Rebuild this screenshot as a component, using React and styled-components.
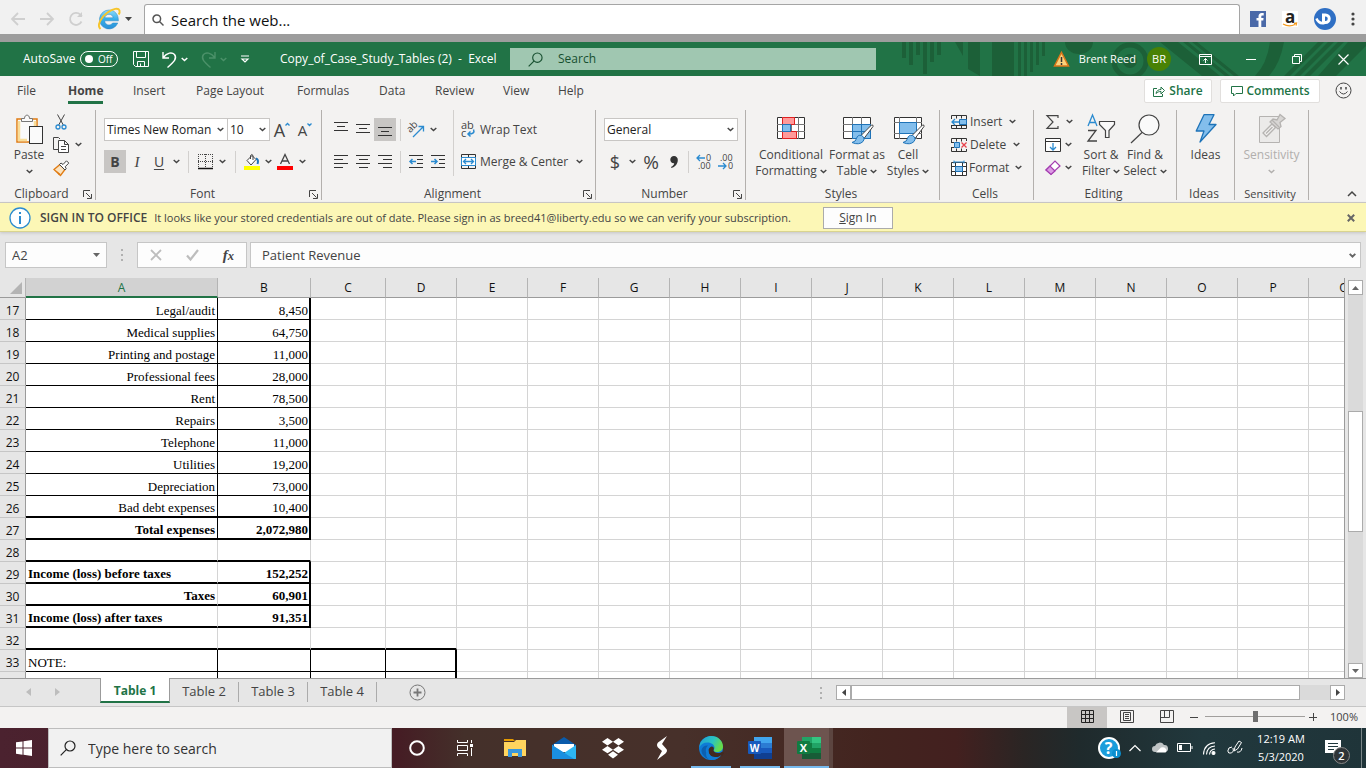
import React from 'react';
import styled, { createGlobalStyle, css } from 'styled-components';

const GlobalStyle = createGlobalStyle`
  * { box-sizing: border-box; }
  body { margin: 0; }
  button, input, select {
    font: inherit;
    color: inherit;
    margin: 0;
    padding: 0;
    border: 0;
    background: none;
    border-radius: 0;
    outline: 0;
  }
  svg { display: block; flex: none; overflow: visible; }
`;

const columns = [
  ['A', 192], ['B', 93], ['C', 75], ['D', 71], ['E', 71], ['F', 71], ['G', 71], ['H', 71],
  ['I', 71], ['J', 71], ['K', 71], ['L', 71], ['M', 71], ['N', 71], ['O', 71], ['P', 71], ['Q', 71],
];

const rows = [
  { n: 17, label: 'Legal/audit', value: '8,450', kind: 'line' },
  { n: 18, label: 'Medical supplies', value: '64,750', kind: 'line' },
  { n: 19, label: 'Printing and postage', value: '11,000', kind: 'line' },
  { n: 20, label: 'Professional fees', value: '28,000', kind: 'line' },
  { n: 21, label: 'Rent', value: '78,500', kind: 'line' },
  { n: 22, label: 'Repairs', value: '3,500', kind: 'line' },
  { n: 23, label: 'Telephone', value: '11,000', kind: 'line' },
  { n: 24, label: 'Utilities', value: '19,200', kind: 'line' },
  { n: 25, label: 'Depreciation', value: '73,000', kind: 'line' },
  { n: 26, label: 'Bad debt expenses', value: '10,400', kind: 'lineEnd' },
  { n: 27, label: 'Total expenses', value: '2,072,980', kind: 'total', bold: true },
  { n: 28, kind: 'gap' },
  { n: 29, label: 'Income (loss) before taxes', value: '152,252', kind: 'income', bold: true, left: true },
  { n: 30, label: 'Taxes', value: '60,901', kind: 'income', bold: true },
  { n: 31, label: 'Income (loss) after taxes', value: '91,351', kind: 'income', bold: true, left: true },
  { n: 32, kind: 'noteGap' },
  { n: 33, label: 'NOTE:', kind: 'note', left: true },
  { n: '', kind: 'note' },
];

const GRID = '1px solid #d4d4d4';
const THIN = '1px solid #000';
const THICK = '2px solid #000';

// right and bottom border of one cell
const cellBorders = (kind, col) => {
  let right = GRID;
  let bottom = GRID;
  if (kind === 'line' || kind === 'lineEnd' || kind === 'total') {
    if (col < 2) bottom = kind === 'line' ? THIN : THICK;
    if (col === 0) right = THIN;
    if (col === 1) right = THICK;
  }
  if (kind === 'gap' && col < 2) bottom = THICK;
  if (kind === 'income') {
    if (col < 2) bottom = THICK;
    if (col === 1) right = THICK;
  }
  if (kind === 'noteGap' && col < 4) bottom = THICK;
  if (kind === 'note' && col < 4) {
    bottom = THIN;
    right = col === 3 ? THICK : THIN;
  }
  return { right, bottom };
};

/* ---------- icons ---------- */

const Icon = ({ w = 16, h = 16, c = '#444', sw = 1, children, ...rest }) => (
  <svg width={w} height={h} viewBox={`0 0 ${w} ${h}`} fill="none" stroke={c} strokeWidth={sw} aria-hidden="true" {...rest}>
    {children}
  </svg>
);

const Chevron = ({ c = '#444', sw = 1.4 }) => (
  <Icon w={7} h={5} c={c} sw={sw}><path d="M.7 .9 3.5 3.6 6.3 .9" /></Icon>
);

const Launcher = () => (
  <Icon w={9} h={9}><path d="M.5 7V.5H7M3 3l4.500 4.500M8.500 4v4.500H4" /></Icon>
);

const IELogo = () => (
  <Icon w={24} h={24} sw={0}>
    <defs>
      <linearGradient id="ie" x1="0" y1="0" x2="0" y2="1">
        <stop offset="0" stopColor="#8fdcfb" />
        <stop offset=".5" stopColor="#35aeea" />
        <stop offset="1" stopColor="#2b8fd6" />
      </linearGradient>
    </defs>
    <path d="M12 3a9.500 9.500 0 1 0 8.800 13h-5.200c-.8 1.300-2 2-3.600 2-2.500 0-4.200-1.700-4.300-4.200h13.700C21.600 7.500 17.800 3 12 3zm-4.200 7.800C8.200 8.700 9.800 7.300 12 7.300s3.800 1.400 4.100 3.500z" fill="url(#ie)" stroke="#2a86c4" strokeWidth=".5" />
    <path d="M3.500 22C-.5 18.500 4 10 10.500 5.500 16 1.500 21.500.5 22.500 3.500c.4 1.300 0 2.700-.8 4" stroke="#f7c52b" strokeWidth="1.900" />
  </Icon>
);

const SearchGlass = ({ s = 16, c = '#444', sw = 1.2 }) => (
  <svg width={s} height={s} viewBox="0 0 16 16" fill="none" stroke={c} strokeWidth={sw} aria-hidden="true">
    <circle cx="10" cy="6" r="5" />
    <path d="M6.300 9.700.7 15.300" />
  </svg>
);

const TitleArt = () => (
  <svg width="466" height="34" viewBox="0 0 466 34" fill="#1c6038" aria-hidden="true">
    <path d="M2 0h4v16H2zM9 0h4v23H9zM16 0h4v13h-4zM23 0h4v32h-4zM30 0h4v20h-4zM37 0h4v13h-4z" />
    <path d="M55 0h8v14zM68 0h12v34L68 27zM92 0h22v34H92z" />
    <path d="M118 0h3v34h-3zM124 0h3v34h-3zM130 0h3v30h-3zM136 0h3v23h-3zM142 0h3v14h-3z" />
    <path d="M165 0h28a14 12 0 0 1-28 0z" />
    <circle cx="230" cy="19" r="16" fill="none" stroke="#1c6038" strokeWidth="5" clipPath="url(#artClip)" />
    <clipPath id="artClip"><path d="M0 0h466v34H0z" /></clipPath>
    <circle cx="230" cy="19" r="7" />
    <path d="M260 0h18l42 34h-18zM283 0h5l42 34h-5zM292 0h5l42 34h-5z" />
    <path d="M370 0h14q-4 22-15 34h-14q12-12 15-34z" />
    <path d="M418 0h6l-34 34h-6zM428 0h6l-34 34h-6zM438 0h6l-34 34h-6zM448 0h18v4l-30 30h-18z" />
  </svg>
);

const PasteIcon = () => (
  <Icon w={28} h={31}>
    <rect x="2" y="5" width="20" height="23" fill="#fafafa" stroke="#e07b12" strokeWidth="1.500" />
    <path d="M4 7v19h8" stroke="#f9dd98" strokeWidth="2.500" />
    <path d="M20 7v5" stroke="#f9dd98" strokeWidth="2.500" />
    <path d="M6.500 7.500v-3h3c0-4.500 5-4.500 5 0h3v3z" fill="#fafafa" stroke="#777" />
    <rect x="14.500" y="12.500" width="13" height="17" fill="#fafafa" stroke="#333" />
  </Icon>
);

const CutIcon = () => (
  <Icon w={16} h={16}>
    <path d="M4.500.5 10.300 11M11.500.5 5.700 11" />
    <circle cx="5" cy="13" r="2" stroke="#2b8bd0" strokeWidth="1.300" />
    <circle cx="11" cy="13" r="2" stroke="#2b8bd0" strokeWidth="1.300" />
  </Icon>
);

const CopyIcon = () => (
  <Icon w={17} h={16}>
    <path d="M5.500 12.500h-5V.5h5l1.500 1.500" />
    <path d="M5.500 3.500h6l4 4v8h-10zM11.500 3.500v4h4M8 9.500h5M8 12.500h5" fill="#fff" />
  </Icon>
);

const BrushIcon = () => (
  <Icon w={17} h={16}>
    <path d="M1 9.500 7 4.500 12 9.500 7.500 15.500z" fill="#fbe3c0" stroke="#e07b12" strokeWidth="1.300" />
    <path d="M3 10.500 7.500 14 6 15.300z" fill="#e07b12" stroke="none" />
    <path d="M6.500 4.500 8 3l2 1.500L13.500.8l2.300 2.300-3.600 3.600 1 2L12 10z" fill="#fff" stroke="#444" />
  </Icon>
);

const BordersIcon = () => (
  <Icon w={15} h={15}>
    <path d="M.5 0v14M0 .5h15M14.500 0v14M7.500 0v14M0 7.500h15" strokeDasharray="1 1" />
    <path d="M0 14.500h15" stroke="#111" strokeWidth="1.500" />
  </Icon>
);

const FillIcon = () => (
  <Icon w={17} h={16}>
    <path d="M3 6.500 8 1.500l4 4-5 5.500z" fill="#fff" />
    <path d="M6.500 5V1.500q1.500-2 2.500 0V6" />
    <path d="M12 4.500q3 1 1.500 5.500" stroke="#1e73b8" strokeWidth="2" />
    <path d="M0 14h16" stroke="#ff0" strokeWidth="4" />
  </Icon>
);

const lineSets = {
  top: [[0, 0, 14], [4, 3, 8], [8, 0, 14]],
  middle: [[2, 0, 14], [6, 3, 8], [10, 0, 14]],
  bottom: [[5, 0, 14], [9, 3, 8], [13, 0, 14]],
  left: [[1, 0, 14], [5, 0, 9], [9, 0, 14], [13, 0, 9]],
  center: [[1, 0, 14], [5, 3, 9], [9, 0, 14], [13, 3, 9]],
  right: [[1, 0, 14], [5, 5, 9], [9, 0, 14], [13, 5, 9]],
};

const LinesIcon = ({ kind }) => (
  <Icon w={14} h={16} c="#333">
    {lineSets[kind].map(([y, x, len]) => <path key={y} d={`M${x} ${y + 0.5}h${len}`} />)}
  </Icon>
);

const IndentIcon = ({ out }) => (
  <Icon w={15} h={16} c="#333">
    <path d="M0 1.500h14M8 5.500h6M8 9.500h6M0 13.500h14" />
    <path d={out ? 'M7 7.500H1M3.500 5 1 7.500 3.500 10' : 'M0 7.500h6M3.500 5 6 7.500 3.500 10'} stroke="#2b8bd0" strokeWidth="1.500" />
  </Icon>
);

const OrientationIcon = () => (
  <Icon w={17} h={16}>
    <text x="0" y="8" fontSize="10" fill="#444" stroke="none" transform="rotate(-45 5 7)">ab</text>
    <path d="M5 15 15 5M10.500 4.500H15.500V9.500" stroke="#2b8bd0" strokeWidth="1.300" />
  </Icon>
);

const WrapIcon = () => (
  <Icon w={15} h={17}>
    <text x="0" y="8" fontSize="11" fill="#444" stroke="none">ab</text>
    <text x="0" y="16" fontSize="11" fill="#444" stroke="none">c</text>
    <path d="M12.500 8.500q2 4.500-5 4.500M9.500 10.500 7 13l2.500 2.500" stroke="#2b8bd0" strokeWidth="1.500" />
  </Icon>
);

const MergeIcon = () => (
  <Icon w={15} h={15} c="#333">
    <path d="M.5.5h14v14H.5zM7.500 0v3M7.500 12v3" />
    <path d="M.5 3.500h14v8H.5z" fill="#fff" stroke="#2b8bd0" />
    <path d="M2.500 7.500h10M5 5 2.500 7.500 5 10M10 5l2.500 2.500L10 10" stroke="#2b8bd0" strokeWidth="1.300" />
  </Icon>
);

const DecimalIcon = ({ less }) => (
  <Icon w={17} h={16}>
    <text x={less ? 10 : 2} y="7" fontSize="9" fill="#444" stroke="none">{less ? '0' : '.00'}</text>
    <text x={less ? 2 : 10} y="15" fontSize="9" fill="#444" stroke="none">{less ? '.00' : '0'}</text>
    <path d={less ? 'M9 4H1M4 1 1 4l3 3' : 'M0 12h8M5 9l3 3-3 3'} stroke="#2b8bd0" strokeWidth="1.300" />
  </Icon>
);

const ConditionalIcon = () => (
  <Icon w={28} h={22} c="#333">
    <path d="M.5.5h27v21H.5z" fill="#fff" />
    <path d="M0 7.500h28M0 14.500h28M5.500 0v22M14.500 0v22M21.500 0v22" stroke="#777" />
    <path d="M5.500.5h12v7h-12zM5.500 14.500h14v7h-14z" fill="#ff9a9a" stroke="#e02020" />
    <path d="M5.500 7.500h8v7h-8z" fill="#83beec" stroke="#1e73b8" />
  </Icon>
);

const PaintBrush = () => (
  <>
    <path d="M28.500 8 18 18.500l3 3L30 9.500q.5-2-1.500-1.500z" fill="#fff" stroke="#444" />
    <path d="M18.500 18.500q-4-1-5 3-.5 3-4.500 4 7 3 11-1 2-2.500.5-4.500z" fill="#83beec" stroke="#1e73b8" />
  </>
);

const FormatTableIcon = () => (
  <Icon w={28} h={22} c="#333">
    <path d="M.5.5h27v21H.5z" fill="#fff" />
    <path d="M0 7.500h28M0 14.500h28M9.500 0v22M18.500 0v22" stroke="#777" />
    <path d="M9.500 7.500h18v14h-18z" fill="#83beec" stroke="#1e73b8" />
    <path d="M9.500 14.500h18M18.500 7.500v14" stroke="#1e73b8" />
    <PaintBrush />
  </Icon>
);

const CellStylesIcon = () => (
  <Icon w={28} h={22} c="#333">
    <path d="M.5.5h27v21H.5z" fill="#fff" />
    <path d="M0 5.500h28M0 16.500h28M5.500 0v22M22.500 0v22" stroke="#777" />
    <path d="M5.500 5.500h17v11h-17z" fill="#83beec" stroke="#1e73b8" />
    <PaintBrush />
  </Icon>
);

const InsertCellsIcon = () => (
  <Icon w={16} h={14} c="#333">
    <path d="M.5 4V.5h15v13H.5V10M5.500.5v3M10.500.5v3M5.500 10.500v3M10.500 10.500v3M0 10.500h15" fill="none" />
    <path d="M8.500 4.500h7v5h-7z" fill="#83beec" stroke="#1e73b8" />
    <path d="M8 7H1M4 4 1 7l3 3" stroke="#2b8bd0" strokeWidth="1.300" />
  </Icon>
);

const DeleteCellsIcon = () => (
  <Icon w={16} h={14} c="#333">
    <path d="M.5 4V.5h15V3M.5 10v3.500h15V11M5.500.5v3M10.500.5v3M5.500 10.500v3M10.500 10.500v3M0 4.500h3M0 9.500h3" />
    <path d="M3.500 4.500h5v5h-5z" fill="#83beec" stroke="#1e73b8" />
    <path d="m10.500 4.500 5 5M15.500 4.500l-5 5" stroke="#e8414a" strokeWidth="1.300" />
  </Icon>
);

const FormatCellsIcon = () => (
  <Icon w={16} h={16} c="#333">
    <path d="M.5 2.500h15v13H.5zM.5 6.500h15M.5 11.500h15M4.500 2.500v13M11.500 2.500v13" fill="#fff" />
    <path d="M4.500 6.500h7v5h-7z" fill="#83beec" stroke="#1e73b8" />
    <path d="M3 .5v3M13 .5v3M3 2h10" stroke="#2b8bd0" />
  </Icon>
);

const SigmaIcon = () => (
  <Icon w={14} h={14} sw={1.2}><path d="M13 3V.7H2L8 7l-6 6.300h11V11" /></Icon>
);

const FillDownIcon = () => (
  <Icon w={16} h={14} c="#333">
    <path d="M.5.5h15v13H.5zM.5 3.500h15" fill="#fff" />
    <path d="M8 5v7M5 9l3 3 3-3" stroke="#2b8bd0" strokeWidth="1.300" />
  </Icon>
);

const EraserIcon = () => (
  <Icon w={16} h={15} c="#a33db0" sw={1.200}>
    <path d="M1 10 10 1l5 5-9 8.300z" fill="#fff" />
    <path d="m1 10 4-4 5 5-4 3.500z" fill="#dc9ae4" />
  </Icon>
);

const SortIcon = () => (
  <Icon w={29} h={28}>
    <path d="M1 12 5.500 1 10 12M2.500 8.500h6" stroke="#2b8bd0" strokeWidth="1.300" />
    <path d="M1 16.500h8L1 27h9" strokeWidth="1.300" />
    <path d="M12.500 7.500h15v3l-5.500 6v7h-3.500v-7l-6-6z" fill="#fafafa" strokeWidth="1.200" />
  </Icon>
);

const FindIcon = () => (
  <Icon w={30} h={30} sw={1.200}>
    <circle cx="19" cy="11" r="10" fill="#fafafa" />
    <path d="M12 18.500 1 29" />
  </Icon>
);

const IdeasIcon = () => (
  <Icon w={22} h={29} c="#1e73b8">
    <path d="M9 .7h10L14 10.500h7L5 28l4-11H1.200z" fill="#83beec" strokeWidth="1.300" strokeLinejoin="round" />
  </Icon>
);

const SensitivityIcon = () => (
  <Icon w={28} h={30} c="#b5b3b1">
    <path d="M1.500 2.500h20v26h-20z" fill="#ebeae9" />
    <path d="m5 19 9-9 3.500 3.500-9 9zM8 19.500l6.500-6.500" fill="#f3f2f1" strokeWidth="1.300" />
    <path d="m12 8 3-3 4 1 3-5.500 5 4-5 4 1 4-3 2.500z" fill="#d8d6d4" strokeWidth="1.300" />
    <path d="m14 6 7 7" strokeWidth="1.300" />
  </Icon>
);

/* ---------- page ---------- */

const Page = styled.div`
  display: flex;
  flex-direction: column;
  height: 100vh;
  min-height: 560px;
  overflow: hidden;
  font-family: "Open Sans", "Noto Sans", sans-serif;
  font-size: 12px;
  line-height: 16px;
  color: #444;
  background: #e6e6e6;
`;

const Row = styled.div`
  display: flex;
  align-items: ${p => p.$end ? 'flex-end' : 'center'};
  gap: ${p => p.$gap || 0}px;
`;

const Spacer = styled.div`
  flex: 1;
`;

const BrowserBar = styled.div`
  display: flex;
  align-items: center;
  flex: none;
  height: 42px;
  padding: 4px 10px 0 10px;
  background: #f1f1f1;
  border-bottom: 8px solid #9d9d9d;
`;

const PlainButton = styled.button`
  display: flex;
  align-items: center;
  justify-content: center;
  flex: none;
  width: ${p => p.$w ? `${p.$w}px` : 'auto'};
  height: ${p => p.$h ? `${p.$h}px` : 'auto'};
  gap: 4px;
`;

const AddressBox = styled.label`
  display: flex;
  align-items: center;
  flex: 1;
  height: 30px;
  margin: 0 10px 0 12px;
  padding: 0 7px;
  gap: 7px;
  background: #fff;
  border: 1px solid #a5a5a5;
  border-bottom: 0;
  border-radius: 3px 3px 0 0;
  font-size: 15px;
  color: #111;
  input {
    flex: 1;
    height: 24px;
  }
  input::placeholder { color: #111; opacity: 1; }
`;

const TitleBar = styled.header`
  position: relative;
  display: flex;
  align-items: center;
  flex: none;
  height: 34px;
  color: #fff;
  background: #217346;
  > * { position: relative; }
  > svg {
    position: absolute;
    top: 0;
    right: 0;
  }
`;

const QuickAccess = styled.div`
  display: flex;
  align-items: center;
  flex: none;
  width: 280px;
  padding-left: 23px;
`;

const AutoSave = styled.label`
  display: flex;
  align-items: center;
  gap: 5px;
  width: 110px;
`;

const Toggle = styled.span`
  display: flex;
  align-items: center;
  justify-content: space-between;
  width: 38px;
  height: 16px;
  padding: 0 5px 0 4px;
  border: 1px solid #fff;
  border-radius: 8px;
  font-size: 10px;
  line-height: 14px;
  input {
    appearance: none;
    width: 8px;
    height: 8px;
    border-radius: 50%;
    background: #fff;
  }
`;

const DocTitle = styled.div`
  flex: none;
  width: 230px;
  white-space: pre;
`;

const TitleSearch = styled.label`
  display: flex;
  align-items: center;
  flex: 0 1 366px;
  height: 22px;
  padding: 0 18px;
  gap: 15px;
  color: #174f30;
  background: #a0c7b1;
  input { flex: 1; min-width: 0; }
  input::placeholder { color: #174f30; opacity: 1; }
`;

const UserName = styled.span`
  font-size: 11px;
`;

const Avatar = styled.span`
  width: 24px;
  height: 24px;
  margin: 0 11px;
  border-radius: 50%;
  background: #498205;
  font-size: 11px;
  line-height: 24px;
  text-align: center;
`;

const MenuBar = styled.nav`
  display: flex;
  flex: none;
  height: 28px;
  padding: 0 8px 0 17px;
  background: #f3f2f1;
  font-size: 12px;
`;

const MenuTabs = styled.div`
  display: grid;
  grid-template-columns: 51px 65px 63px 101px 82px 56px 68px 55px 40px;
  justify-items: start;
  flex: none;
`;

const MenuTab = styled.button`
  height: 28px;
  padding-top: 5px;
  font-weight: ${p => p.$active ? 700 : 400};
  border-bottom: 3px solid ${p => p.$active ? '#217346' : 'transparent'};
`;

const ActionButton = styled.button`
  display: flex;
  align-items: center;
  justify-content: center;
  width: ${p => p.$w}px;
  height: 24px;
  margin: 3px 8px 0 0;
  gap: 4px;
  background: #fff;
  border: 1px solid #e1dfdd;
  border-radius: 2px;
  color: #217346;
  font-weight: 600;
`;

const Ribbon = styled.div`
  display: flex;
  flex: none;
  height: 99px;
  padding-top: 6px;
  background: #f3f2f1;
  border-bottom: 1px solid #c8c6c4;
`;

const Group = styled.section`
  display: flex;
  flex-direction: column;
  flex: none;
  width: ${p => p.$w}px;
  height: 90px;
  border-right: 1px solid #b3b0ad;
`;

const GroupBody = styled.div`
  display: flex;
  height: 78px;
  padding-left: ${p => p.$pad === undefined ? 8 : p.$pad}px;
  justify-content: ${p => p.$center ? 'center' : 'flex-start'};
`;

const GroupFoot = styled.div`
  display: flex;
  align-items: center;
  height: 12px;
  padding-right: 3px;
  font-size: ${p => p.$small ? 11 : 12}px;
  line-height: 12px;
  span {
    flex: 1;
    text-align: center;
  }
`;

const BigButton = styled.button`
  display: flex;
  flex-direction: column;
  align-items: center;
  justify-content: flex-start;
  flex: none;
  align-self: flex-start;
  width: ${p => p.$w}px;
  padding-top: 4px;
  color: ${p => p.disabled ? '#b1afad' : '#444'};
  white-space: nowrap;
`;

const BigIcon = styled.span`
  display: flex;
  align-items: flex-start;
  height: 32px;
  margin-bottom: 1px;
  padding-top: ${p => p.$low ? 3 : 0}px;
`;

const BigLine = styled.span`
  display: flex;
  align-items: center;
  height: 16px;
  gap: 3px;
`;

const SmallStack = styled.div`
  display: grid;
  grid-template-rows: repeat(3, 23px);
  align-content: start;
  justify-items: start;
  width: ${p => p.$w}px;
  padding-left: ${p => p.$pad || 0}px;
`;

const SmallButton = styled.button`
  display: flex;
  align-items: center;
  gap: ${p => p.$gap || 3}px;
  white-space: nowrap;
  span + svg { margin-left: 4px; }
`;

const ToolRows = styled.div`
  display: grid;
  grid-template-rows: 23px 23px;
  row-gap: 9px;
  align-content: start;
  padding-top: 8px;
  ${p => p.$line && css`
    padding-right: 4px;
    margin-right: 7px;
    border-right: 1px solid #d2d0ce;
    height: 66px;
  `}
`;

const Tool = styled.button`
  display: flex;
  align-items: center;
  justify-content: center;
  flex: none;
  width: ${p => p.$w || 22}px;
  height: 23px;
  background: ${p => p.$on ? '#c8c6c4' : 'transparent'};
`;

const Letter = styled.span`
  font-size: ${p => p.$size || 15}px;
  line-height: 16px;
  font-weight: ${p => p.$bold ? 700 : 400};
  font-style: ${p => p.$italic ? 'italic' : 'normal'};
  font-family: ${p => p.$serif ? '"Liberation Serif", serif' : 'inherit'};
  text-decoration: ${p => p.$under ? 'underline' : 'none'};
  text-underline-offset: 2px;
`;

const Divider = styled.span`
  flex: none;
  width: 1px;
  height: 22px;
  margin: 0 ${p => p.$m || 6}px;
  background: #d2d0ce;
`;

const SelectBox = styled.label`
  display: flex;
  align-items: center;
  width: ${p => p.$w}px;
  height: 23px;
  padding: 0 3px 0 2px;
  background: #fff;
  border: 1px solid #c8c6c4;
  color: #222;
  & + & { border-left: 0; }
  select {
    flex: 1;
    min-width: 0;
    height: 21px;
    appearance: none;
  }
`;

const MessageBar = styled.div`
  display: flex;
  align-items: center;
  flex: none;
  height: 29px;
  padding: 1px 11px 0 9px;
  background: #fcf7b6;
  border-bottom: 1px solid #d9d48f;
  box-shadow: 0 1px 3px #c4c4c4;
  z-index: 1;
  white-space: nowrap;
  strong {
    font-weight: 600;
    margin: 0 7px 0 9px;
  }
`;

const MessageText = styled.span`
  font-size: 11px;
`;

const SignIn = styled.button`
  width: 70px;
  height: 22px;
  margin-left: 32px;
  background: #fdfdfd;
  border: 1px solid #ababab;
`;

const FormulaBar = styled.div`
  display: flex;
  align-items: center;
  flex: none;
  height: 46px;
  padding: 0 5px;
`;

const FormulaBox = styled.div`
  display: flex;
  align-items: center;
  justify-content: space-between;
  flex: ${p => p.$w ? 'none' : 1};
  width: ${p => p.$w ? `${p.$w}px` : 'auto'};
  height: 26px;
  padding: 0 ${p => p.$right || 6}px 0 ${p => p.$left || 6}px;
  background: #fdfdfd;
  border: 1px solid #c6c6c6;
  font-size: 13px;
  input {
    flex: 1;
    min-width: 0;
    height: 24px;
  }
`;

const Dots = styled.span`
  flex: none;
  width: 2px;
  height: 12px;
  margin: 0 14px;
  background: repeating-linear-gradient(#b0b0b0 0 2px, transparent 2px 5px);
`;

const SheetArea = styled.main`
  display: flex;
  flex: 1;
  min-height: 0;
`;

const SheetClip = styled.div`
  flex: 1;
  min-width: 0;
  overflow: hidden;
  border-right: 1px solid #9b9b9b;
`;

const Sheet = styled.table`
  table-layout: fixed;
  width: 1240px;
  border-collapse: separate;
  border-spacing: 0;
`;

const ColHead = styled.th`
  height: 20px;
  padding: 0;
  font-weight: 400;
  line-height: 17px;
  color: ${p => p.$on ? '#217346' : '#111'};
  background: ${p => p.$on ? '#d2d2d2' : '#e6e6e6'};
  border-right: 1px solid #b4b4b4;
  border-bottom: ${p => p.$on ? '2px solid #217346' : '1px solid #9b9b9b'};
`;

const Corner = styled.th`
  padding: 0;
  border-right: 1px solid #b4b4b4;
  border-bottom: 1px solid #9b9b9b;
  svg { margin-left: 10px; }
`;

const RowHead = styled.th`
  height: 22px;
  padding: 4px 0 0;
  font-weight: 400;
  line-height: 17px;
  color: #111;
  background: #e6e6e6;
  border-right: 1px solid #9b9b9b;
  border-bottom: 1px solid #c6c6c6;
`;

const Cell = styled.td`
  height: 22px;
  padding: 0 2px;
  background: #fff;
  border-right: ${p => p.$right};
  border-bottom: ${p => p.$bottom};
  font-family: "Liberation Serif", serif;
  font-size: 13px;
  font-weight: ${p => p.$bold ? 700 : 400};
  line-height: 16px;
  color: #000;
  text-align: ${p => p.$left ? 'left' : 'right'};
  vertical-align: bottom;
  white-space: nowrap;
`;

const NumberCell = styled(Cell)`
  padding-right: 1px;
  text-align: right;
`;

const VScroll = styled.div`
  display: flex;
  flex-direction: column;
  flex: none;
  width: 15px;
  margin: 2px 3px 0;
  background: #dadada;
`;

const ScrollButton = styled.button`
  display: flex;
  align-items: center;
  justify-content: center;
  flex: none;
  width: 15px;
  height: 15px;
  background: #fff;
  border: 1px solid #ababab;
`;

const VTrack = styled.div`
  flex: 1;
  display: grid;
  grid-template-rows: 116fr 122fr 131fr;
`;

const Thumb = styled.div`
  background: #fff;
  border: 1px solid #ababab;
  ${p => p.$v && 'grid-row: 2;'}
`;

const SheetTabs = styled.div`
  display: flex;
  flex: none;
  height: 29px;
  padding-right: 21px;
  border-top: 1px solid #9b9b9b;
  border-bottom: 1px solid #c6c6c6;
`;

const TabArrows = styled.div`
  display: flex;
  justify-content: space-between;
  align-items: center;
  width: 100px;
  padding: 0 40px 2px 26px;
`;

const SheetTab = styled.button`
  width: ${p => p.$active ? 70 : 69}px;
  height: ${p => p.$active ? 25 : 20}px;
  margin-top: ${p => p.$active ? -1 : 3}px;
  padding: ${p => p.$active ? '3px 0 0' : '0 0 2px'};
  font-size: ${p => p.$active ? 12 : 13}px;
  font-weight: ${p => p.$active ? 700 : 400};
  color: ${p => p.$active ? '#217346' : '#444'};
  background: ${p => p.$active ? '#fff' : 'transparent'};
  border-right: 1px solid ${p => p.$active ? '#9b9b9b' : '#ababab'};
  border-left: ${p => p.$active ? '1px solid #9b9b9b' : 0};
  border-bottom: ${p => p.$active ? '2px solid #217346' : 0};
`;

const HScroll = styled.div`
  display: flex;
  width: 509px;
  height: 15px;
  margin-top: 6px;
  background: #dadada;
`;

const HTrack = styled.div`
  flex: 1;
  display: grid;
  grid-template-columns: 449fr 30fr;
`;

const StatusBar = styled.footer`
  display: flex;
  align-items: center;
  justify-content: flex-end;
  flex: none;
  height: 21px;
  padding: 0 8px 2px 0;
  background: #f3f2f1;
  font-size: 11px;
`;

const ViewButton = styled.button`
  display: flex;
  align-items: center;
  justify-content: center;
  width: 40px;
  height: 21px;
  margin-bottom: -2px;
  padding-bottom: 2px;
  background: ${p => p.$on ? '#c8c6c4' : 'transparent'};
`;

const ZoomSlider = styled.input`
  appearance: none;
  width: 100px;
  height: 12px;
  margin: 0 4px;
  background: linear-gradient(#a19f9d, #a19f9d) center / 100% 1px no-repeat;
  &::-webkit-slider-thumb {
    appearance: none;
    width: 5px;
    height: 11px;
    background: #6e6e6e;
  }
`;

const Taskbar = styled.div`
  display: flex;
  flex: none;
  height: 40px;
  color: #fff;
  background: linear-gradient(90deg, #4b222f 0, #451c24 29%, #44302a 34%, #47302a 50%, #43241f 64%, #43201f 70%, #2a2524 75%, #1f2a2c 79%, #21383d 88%, #1f3439 100%);
`;

const TaskSearch = styled.label`
  display: flex;
  align-items: center;
  flex: 0 1 344px;
  height: 40px;
  padding: 0 11px;
  gap: 12px;
  background: #f1f1f1;
  border: 1px solid #bdbdbd;
  font-size: 14px;
  color: #333;
  input { flex: 1; min-width: 0; height: 24px; }
  input::placeholder { color: #333; opacity: 1; }
`;

const TaskButton = styled.button`
  display: flex;
  align-items: center;
  justify-content: center;
  width: 49px;
  height: 40px;
  background: ${p => p.$active ? '#6d544f' : 'transparent'};
  box-shadow: ${p => p.$active ? 'inset -4px 0 #5c4540' : 'none'};
  ${p => p.$open && css`
    background-image: linear-gradient(#76b9ed, #76b9ed);
    background-size: ${p.$active ? '100%' : '40px'} 2px;
    background-position: bottom center;
    background-repeat: no-repeat;
  `}
`;

const Tray = styled.div`
  display: flex;
  align-items: center;
`;

const TrayButton = styled.button`
  display: flex;
  align-items: center;
  justify-content: center;
  width: 25px;
  height: 40px;
`;

const Clock = styled.button`
  width: 68px;
  font-size: 11px;
  line-height: 18px;
  text-align: center;
`;

const Notifications = styled.button`
  position: relative;
  width: 26px;
  height: 40px;
  margin: 0 11px 0 9px;
  padding-left: 1px;
`;

const Badge = styled.span`
  position: absolute;
  right: 0;
  bottom: 4px;
  width: 17px;
  height: 17px;
  border-radius: 50%;
  border: 1px solid #888;
  background: #2f3437;
  font-size: 11px;
  font-weight: 600;
  line-height: 15px;
`;

const DesktopEdge = styled.span`
  width: 5px;
  height: 40px;
  border-left: 1px solid #7a8688;
`;

const RibbonGroup = ({ name, width, launcher, pad, center, small, children }) => (
  <Group $w={width}>
    <GroupBody $pad={pad} $center={center}>{children}</GroupBody>
    <GroupFoot $small={small}>
      <span>{name}</span>
      {launcher && <PlainButton aria-label={`${name} settings`}><Launcher /></PlainButton>}
    </GroupFoot>
  </Group>
);

const Big = ({ icon, lines, width, drop, disabled, low }) => (
  <BigButton $w={width} disabled={disabled}>
    <BigIcon $low={low}>{icon}</BigIcon>
    {lines.map((line, i) => (
      <BigLine key={line || 'drop'}>
        {line}
        {drop && i === lines.length - 1 && <Chevron c={disabled ? '#b1afad' : '#444'} />}
      </BigLine>
    ))}
  </BigButton>
);

const Drop = ({ label, w = 12 }) => (
  <Tool $w={w} aria-label={label}><Chevron /></Tool>
);

const BrowserStrip = () => (
  <BrowserBar>
    <Row $gap={13}>
      <PlainButton aria-label="Back">
        <Icon w={16} h={14} c="#cfcfcf" sw={1.800}><path d="M15 7H2M8 1 2 7l6 6" /></Icon>
      </PlainButton>
      <PlainButton aria-label="Forward">
        <Icon w={16} h={14} c="#cfcfcf" sw={1.800}><path d="M1 7h13M8 1l6 6-6 6" /></Icon>
      </PlainButton>
      <PlainButton aria-label="Reload">
        <Icon w={16} h={16} c="#cfcfcf" sw={1.800}>
          <path d="M13.500 10.500a6 6 0 1 1-1.200-6.800l1.700 1.600" />
          <path d="M14 1v5H9z" fill="#cfcfcf" stroke="none" />
        </Icon>
      </PlainButton>
      <PlainButton aria-label="Browser">
        <IELogo />
        <Icon w={7} h={5} sw={0}><path d="M0 0h7L3.500 4z" fill="#444" /></Icon>
      </PlainButton>
    </Row>
    <AddressBox>
      <Icon w={12} h={12} c="#555" sw={1.500}><circle cx="4.800" cy="4.800" r="3.800" /><path d="m7.500 7.500 4 4" /></Icon>
      <input placeholder="Search the web..." aria-label="Search the web" />
    </AddressBox>
    <Row $gap={16}>
      <PlainButton aria-label="Facebook">
        <Icon w={16} h={16} sw={0}>
          <path d="M0 0h16v16H0z" fill="#4a69a8" />
          <path d="M8.500 16V9.500H6.500V7h2V5.300C8.500 3.300 9.800 2 11.700 2h2v2.500h-1.300c-.8 0-1.100.4-1.100 1.100V7h2.300l-.3 2.500h-2V16z" fill="#fff" />
        </Icon>
      </PlainButton>
      <PlainButton aria-label="Amazon">
        <Icon w={16} h={16} sw={0}>
          <path d="M0 0h16v16H0z" fill="#fff" />
          <text x="3" y="12" fontSize="17" fontWeight="700" fill="#222">a</text>
          <path d="M1 13q6 3.500 12 .5M12 12.500l2.500-.5-.5 2.500" stroke="#f59a1c" strokeWidth="1.300" />
        </Icon>
      </PlainButton>
      <PlainButton aria-label="Search provider">
        <Icon w={22} h={22} sw={0}>
          <circle cx="11" cy="11" r="11" fill="#2f6fc4" />
          <path d="M9.500 7v7.500h2a3.700 3.700 0 0 0 0-7.500z" stroke="#fff" strokeWidth="3" />
          <path d="M2.500 10.500q2 5.500 8 4.500" stroke="#fff" strokeWidth="2.500" />
        </Icon>
      </PlainButton>
      <PlainButton aria-label="Menu">
        <Icon w={4} h={14} sw={0}>
          <circle cx="1" cy="2" r="1.600" fill="#444" />
          <circle cx="1" cy="7" r="1.600" fill="#444" />
          <circle cx="1" cy="12" r="1.600" fill="#444" />
        </Icon>
      </PlainButton>
    </Row>
  </BrowserBar>
);

const ExcelTitle = () => (
  <TitleBar>
    <TitleArt />
    <QuickAccess>
      <AutoSave>
        AutoSave
        <Toggle><input type="checkbox" /> Off</Toggle>
      </AutoSave>
      <PlainButton $w={16} aria-label="Save">
        <Icon w={16} h={16} c="#fff"><path d="M.5.5h15v15H2.500l-2-2zM3.500.5v6h9v-6M4.500 15.500v-5h7v5M7.500 15v-2.500" /></Icon>
      </PlainButton>
      <PlainButton $w={52} aria-label="Undo">
        <Icon w={15} h={17} c="#fff" sw={1.400}><path d="M1 1v6h6M1.300 6.500C5 1.500 10 .8 12.500 3.500 15.500 7.500 12 11 5.500 16.500" /></Icon>
        <Chevron c="#fff" />
      </PlainButton>
      <PlainButton $w={26} aria-label="Redo">
        <Icon w={15} h={17} c="#4b9169" sw={1.400}><path d="M14 1v6H8M13.700 6.500C10 1.500 5 .8 2.500 3.500-.5 7.500 3 11 9.500 16.500" /></Icon>
        <Chevron c="#4b9169" />
      </PlainButton>
      <PlainButton $w={36} aria-label="Customize Quick Access Toolbar">
        <Icon w={8} h={8} c="#fff" sw={1.200}><path d="M0 1h8M1 4l3 3 3-3z" /></Icon>
      </PlainButton>
    </QuickAccess>
    <DocTitle>Copy_of_Case_Study_Tables (2)  -  Excel</DocTitle>
    <TitleSearch>
      <SearchGlass s={15} c="#174f30" />
      <input placeholder="Search" aria-label="Search" />
    </TitleSearch>
    <Spacer />
    <Row $gap={10}>
      <Icon w={15} h={15} sw={0}>
        <path d="M7.500.5 14.500 14H.5z" fill="#fbd27c" stroke="#d9761a" strokeWidth="1.500" />
        <path d="M7.500 5v5M7.500 11v2" stroke="#333" strokeWidth="1.500" />
      </Icon>
      <UserName>Brent Reed</UserName>
    </Row>
    <Avatar>BR</Avatar>
    <PlainButton $w={46} $h={30} aria-label="Ribbon display options">
      <Icon w={13} h={11} c="#fff"><path d="M.5.5h12v10H.5zM.5 2.500h12M6.500 9V4.500M4.500 6.500l2-2 2 2" /></Icon>
    </PlainButton>
    <PlainButton $w={46} $h={30} aria-label="Minimize">
      <Icon w={10} h={10} c="#fff"><path d="M0 5.500h10" /></Icon>
    </PlainButton>
    <PlainButton $w={46} $h={30} aria-label="Restore">
      <Icon w={10} h={10} c="#fff"><path d="M.5 2.500h7v7h-7zM2.500 2V.5h7v7H8" /></Icon>
    </PlainButton>
    <PlainButton $w={46} $h={30} aria-label="Close">
      <Icon w={11} h={11} c="#fff" sw={1.200}><path d="m.5.5 10 10M10.500.5l-10 10" /></Icon>
    </PlainButton>
  </TitleBar>
);

const ExcelMenu = () => (
  <MenuBar>
    <MenuTabs>
      {['File', 'Home', 'Insert', 'Page Layout', 'Formulas', 'Data', 'Review', 'View', 'Help'].map(t => (
        <MenuTab key={t} $active={t === 'Home'}>{t}</MenuTab>
      ))}
    </MenuTabs>
    <Spacer />
    <ActionButton $w={68}>
      <Icon w={12} h={12} c="#217346"><path d="M4 3.500H.5v8h9V9M3 8.500c.5-3 2.500-4 5-4V2l3.500 3.500L8 9V6.500C6 6.500 4.500 7 3 8.500z" /></Icon>
      Share
    </ActionButton>
    <ActionButton $w={100}>
      <Icon w={12} h={11} c="#217346"><path d="M.5.5h11v7H5l-2.500 2.500V7.500h-2z" /></Icon>
      Comments
    </ActionButton>
    <PlainButton $w={30} $h={28} aria-label="Feedback">
      <Icon w={17} h={17}>
        <circle cx="8.500" cy="8.500" r="7.500" />
        <path d="M4.500 9.500q4 5 8 0" />
        <path d="M6 5v2.500M11 5v2.500" strokeWidth="1.500" />
      </Icon>
    </PlainButton>
  </MenuBar>
);

const ExcelRibbon = () => (
  <Ribbon>
    <RibbonGroup name="Clipboard" width={96} launcher>
      <Big icon={<PasteIcon />} lines={['Paste', '']} width={42} drop />
      <SmallStack $w={40} $pad={3}>
        <SmallButton aria-label="Cut"><CutIcon /></SmallButton>
        <SmallButton $gap={5} aria-label="Copy"><CopyIcon /><Chevron /></SmallButton>
        <SmallButton aria-label="Format Painter"><BrushIcon /></SmallButton>
      </SmallStack>
    </RibbonGroup>

    <RibbonGroup name="Font" width={226} launcher>
      <ToolRows>
        <Row>
          <SelectBox $w={124}>
            <select aria-label="Font"><option>Times New Roman</option></select>
            <Chevron />
          </SelectBox>
          <SelectBox $w={42}>
            <select aria-label="Font size"><option>10</option></select>
            <Chevron />
          </SelectBox>
          <Tool $w={24} aria-label="Increase font size">
            <Letter $size={18}>A</Letter>
            <Icon w={5} h={16} c="#2b8bd0" sw={1.300}><path d="M.5 3.500 2.500 1.500l2 2" /></Icon>
          </Tool>
          <Tool $w={22} aria-label="Decrease font size">
            <Letter $size={15}>A</Letter>
            <Icon w={5} h={16} c="#2b8bd0" sw={1.300}><path d="m.5 1.500 2 2 2-2" /></Icon>
          </Tool>
        </Row>
        <Row>
          <Tool $on aria-label="Bold"><Letter $bold $size={14}>B</Letter></Tool>
          <Tool aria-label="Italic"><Letter $italic $serif>I</Letter></Tool>
          <Tool aria-label="Underline"><Letter $under $size={14}>U</Letter></Tool>
          <Drop label="Underline style" />
          <Divider />
          <Tool $w={20} aria-label="Borders"><BordersIcon /></Tool>
          <Drop label="Border style" w={14} />
          <Divider />
          <Tool $w={20} aria-label="Fill color"><FillIcon /></Tool>
          <Drop label="Fill color list" />
          <Tool aria-label="Font color">
            <Icon w={16} h={16}>
              <path d="M3.500 10 8 .5l4.500 9.500M5 7h6" strokeWidth="1.300" />
              <path d="M0 14h16" stroke="#f00" strokeWidth="4" />
            </Icon>
          </Tool>
          <Drop label="Font color list" />
        </Row>
      </ToolRows>
    </RibbonGroup>

    <RibbonGroup name="Alignment" width={274} launcher>
      <ToolRows $line>
        <Row>
          <Tool aria-label="Top align"><LinesIcon kind="top" /></Tool>
          <Tool aria-label="Middle align"><LinesIcon kind="middle" /></Tool>
          <Tool $on aria-label="Bottom align"><LinesIcon kind="bottom" /></Tool>
          <Divider $m={4} />
          <Tool aria-label="Orientation"><OrientationIcon /></Tool>
          <Drop label="Orientation list" />
        </Row>
        <Row>
          <Tool aria-label="Align left"><LinesIcon kind="left" /></Tool>
          <Tool aria-label="Center"><LinesIcon kind="center" /></Tool>
          <Tool aria-label="Align right"><LinesIcon kind="right" /></Tool>
          <Divider $m={4} />
          <Tool aria-label="Decrease indent"><IndentIcon out /></Tool>
          <Tool aria-label="Increase indent"><IndentIcon /></Tool>
        </Row>
      </ToolRows>
      <ToolRows>
        <SmallButton $gap={4}><WrapIcon /><span>Wrap Text</span></SmallButton>
        <SmallButton $gap={4}><MergeIcon /><span>Merge &amp; Center</span><Chevron /></SmallButton>
      </ToolRows>
    </RibbonGroup>

    <RibbonGroup name="Number" width={150} launcher>
      <ToolRows>
        <SelectBox $w={134}>
          <select aria-label="Number format"><option>General</option></select>
          <Chevron />
        </SelectBox>
        <Row>
          <Tool aria-label="Accounting format"><Letter $size={18}>$</Letter></Tool>
          <Drop label="Accounting list" />
          <Tool $w={26} aria-label="Percent"><Letter $size={19}>%</Letter></Tool>
          <Tool $w={20} aria-label="Comma style">
            <Icon w={8} h={12} sw={0}><path d="M4 0a3.700 3.700 0 0 1 3.800 4C7.800 8 5 11 1.500 12L1 11c2-1 3-2.200 3.200-3.800C1.800 7.400.3 5.600.3 3.700A3.600 3.600 0 0 1 4 0z" fill="#333" /></Icon>
          </Tool>
          <Divider $m={4} />
          <Tool aria-label="Increase decimal"><DecimalIcon less /></Tool>
          <Tool aria-label="Decrease decimal"><DecimalIcon /></Tool>
        </Row>
      </ToolRows>
    </RibbonGroup>

    <RibbonGroup name="Styles" width={194}>
      <Big icon={<ConditionalIcon />} lines={['Conditional', 'Formatting']} width={74} drop low />
      <Big icon={<FormatTableIcon />} lines={['Format as', 'Table']} width={58} drop low />
      <Big icon={<CellStylesIcon />} lines={['Cell', 'Styles']} width={44} drop low />
    </RibbonGroup>

    <RibbonGroup name="Cells" width={94} pad={11}>
      <SmallStack $w={80}>
        <SmallButton><InsertCellsIcon /><span>Insert</span><Chevron /></SmallButton>
        <SmallButton><DeleteCellsIcon /><span>Delete</span><Chevron /></SmallButton>
        <SmallButton $gap={2}><FormatCellsIcon /><span>Format</span><Chevron /></SmallButton>
      </SmallStack>
    </RibbonGroup>

    <RibbonGroup name="Editing" width={143} pad={11}>
      <SmallStack $w={34}>
        <SmallButton $gap={7} aria-label="AutoSum"><SigmaIcon /><Chevron /></SmallButton>
        <SmallButton $gap={4} aria-label="Fill"><FillDownIcon /><Chevron /></SmallButton>
        <SmallButton $gap={4} aria-label="Clear"><EraserIcon /><Chevron /></SmallButton>
      </SmallStack>
      <Big icon={<SortIcon />} lines={['Sort &', 'Filter']} width={44} drop />
      <Big icon={<FindIcon />} lines={['Find &', 'Select']} width={44} drop />
    </RibbonGroup>

    <RibbonGroup name="Ideas" width={58} pad={0} center>
      <Big icon={<IdeasIcon />} lines={['Ideas']} width={50} />
    </RibbonGroup>

    <RibbonGroup name="Sensitivity" width={74} pad={0} center small>
      <Big icon={<SensitivityIcon />} lines={['Sensitivity', '']} width={70} drop disabled />
    </RibbonGroup>

    <Spacer />
    <Row $end>
      <PlainButton $w={28} $h={16} aria-label="Collapse ribbon">
        <Icon w={10} h={6} sw={1.500}><path d="m1 5 4-4 4 4" /></Icon>
      </PlainButton>
    </Row>
  </Ribbon>
);

const SignInMessage = () => (
  <MessageBar>
    <Icon w={22} h={22} c="#2b8bd0" sw={1.300}>
      <circle cx="11" cy="11" r="10" fill="#fff" />
      <path d="M11 9v8M11 5v2" strokeWidth="2" />
    </Icon>
    <strong>SIGN IN TO OFFICE</strong>
    <MessageText>It looks like your stored credentials are out of date. Please sign in as breed41@liberty.edu so we can verify your subscription.</MessageText>
    <SignIn><u>S</u>ign In</SignIn>
    <Spacer />
    <PlainButton aria-label="Dismiss">
      <Icon w={8} h={8} c="#666" sw={2}><path d="m.8.8 6.400 6.400M7.200.8.8 7.200" /></Icon>
    </PlainButton>
  </MessageBar>
);

const Formula = () => (
  <FormulaBar>
    <FormulaBox $w={102}>
      <input defaultValue="A2" aria-label="Name box" />
      <Icon w={7} h={4} sw={0}><path d="M0 0h7L3.500 4z" fill="#666" /></Icon>
    </FormulaBox>
    <Dots />
    <FormulaBox $w={110} $left={12} $right={12}>
      <PlainButton aria-label="Cancel">
        <Icon w={12} h={12} c="#bdbdbd" sw={1.800}><path d="m1 1 10 10M11 1 1 11" /></Icon>
      </PlainButton>
      <PlainButton aria-label="Enter">
        <Icon w={13} h={12} c="#bdbdbd" sw={2.200}><path d="m1 6.500 3.500 4L12 1" /></Icon>
      </PlainButton>
      <PlainButton aria-label="Insert function">
        <Letter $italic $serif $bold>f<small>x</small></Letter>
      </PlainButton>
    </FormulaBox>
    <Icon w={3} h={1} />
    <FormulaBox $left={11} $right={4}>
      <input defaultValue="Patient Revenue" aria-label="Formula bar" />
      <Chevron c="#666" sw={2} />
    </FormulaBox>
  </FormulaBar>
);

const SheetGrid = () => (
  <SheetArea>
    <SheetClip>
      <Sheet>
        <colgroup>
          <col width="26" />
          {columns.map(([name, w]) => <col key={name} width={w} />)}
        </colgroup>
        <thead>
          <tr>
            <Corner aria-label="Select all">
              <Icon w={12} h={12} sw={0}><path d="M12 0v12H0z" fill="#b4b4b4" /></Icon>
            </Corner>
            {columns.map(([name]) => <ColHead key={name} $on={name === 'A'}>{name}</ColHead>)}
          </tr>
        </thead>
        <tbody>
          {rows.map((row, r) => (
            <tr key={r}>
              <RowHead>{row.n}</RowHead>
              {columns.map(([name], i) => {
                const { right, bottom } = cellBorders(row.kind, i);
                if (i === 1) {
                  return <NumberCell key={name} $right={right} $bottom={bottom} $bold={row.bold}>{row.value}</NumberCell>;
                }
                return (
                  <Cell key={name} $right={right} $bottom={bottom} $bold={row.bold} $left={row.left}>
                    {i === 0 ? row.label : null}
                  </Cell>
                );
              })}
            </tr>
          ))}
        </tbody>
      </Sheet>
    </SheetClip>
    <VScroll>
      <ScrollButton aria-label="Scroll up"><Icon w={7} h={4} sw={0}><path d="M0 4h7L3.500 0z" fill="#666" /></Icon></ScrollButton>
      <VTrack><Thumb $v /></VTrack>
      <ScrollButton aria-label="Scroll down"><Icon w={7} h={4} sw={0}><path d="M0 0h7L3.500 4z" fill="#666" /></Icon></ScrollButton>
    </VScroll>
  </SheetArea>
);

const TabStrip = () => (
  <SheetTabs>
    <TabArrows>
      <PlainButton aria-label="Previous sheet"><Icon w={5} h={8} sw={0}><path d="M5 0v8L0 4z" fill="#bdbdbd" /></Icon></PlainButton>
      <PlainButton aria-label="Next sheet"><Icon w={5} h={8} sw={0}><path d="M0 0v8l5-4z" fill="#bdbdbd" /></Icon></PlainButton>
    </TabArrows>
    {['Table 1', 'Table 2', 'Table 3', 'Table 4'].map((t, i) => <SheetTab key={t} $active={i === 0}>{t}</SheetTab>)}
    <PlainButton $w={80} $h={26} aria-label="New sheet">
      <Icon w={17} h={17} c="#777"><circle cx="8.500" cy="8.500" r="7.500" /><path d="M8.500 4.500v8M4.500 8.500h8" strokeWidth="1.800" /></Icon>
    </PlainButton>
    <Spacer />
    <Row><Dots /></Row>
    <HScroll>
      <ScrollButton aria-label="Scroll left"><Icon w={4} h={7} sw={0}><path d="M4 0v7L0 3.500z" fill="#444" /></Icon></ScrollButton>
      <HTrack><Thumb /></HTrack>
      <ScrollButton aria-label="Scroll right"><Icon w={4} h={7} sw={0}><path d="M0 0v7l4-3.500z" fill="#444" /></Icon></ScrollButton>
    </HScroll>
  </SheetTabs>
);

const Status = () => (
  <StatusBar>
    <ViewButton $on aria-label="Normal view">
      <Icon w={13} h={13} c="#222"><path d="M.5.5h12v12H.5zM.5 4.500h12M.5 8.500h12M4.500.5v12M8.500.5v12" /></Icon>
    </ViewButton>
    <ViewButton aria-label="Page layout view">
      <Icon w={14} h={13}><path d="M.5.5h13v12H.5zM3.500 2.500h7v8h-7zM5 4.500h4M5 6.500h4M5 8.500h4" /></Icon>
    </ViewButton>
    <ViewButton aria-label="Page break preview">
      <Icon w={14} h={13}><path d="M.5.5h13v12H.5zM4.500.5v7M9.500.5v7M.5 7.500h9" /></Icon>
    </ViewButton>
    <Row>
      <PlainButton $w={14} aria-label="Zoom out"><Icon w={8} h={8}><path d="M0 4.500h8" /></Icon></PlainButton>
      <ZoomSlider type="range" min="0" max="200" defaultValue="100" aria-label="Zoom" />
      <PlainButton $w={8} aria-label="Zoom in"><Icon w={8} h={8}><path d="M0 4.500h8M4.500 0v8" /></Icon></PlainButton>
    </Row>
    <Icon w={13} h={1} />
    <span>100%</span>
  </StatusBar>
);

const WindowsBar = () => (
  <Taskbar>
    <PlainButton $w={48} $h={40} aria-label="Start">
      <Icon w={16} h={16} sw={0}><path d="M0 2.300 6.500 1.400v6.200H0zM7.500 1.200 16 0v7.600H7.500zM0 8.500h6.500v6.200L0 13.800zM7.500 8.500H16V16l-8.500-1.200z" fill="#fff" /></Icon>
    </PlainButton>
    <TaskSearch>
      <SearchGlass c="#222" />
      <input placeholder="Type here to search" aria-label="Type here to search" />
    </TaskSearch>
    <TaskButton aria-label="Cortana">
      <Icon w={16} h={16} c="#fff" sw={2}><circle cx="8" cy="8" r="6.800" /></Icon>
    </TaskButton>
    <TaskButton aria-label="Task View">
      <Icon w={18} h={16} c="#fff"><path d="M.5 0v2.500h10V0M.5 16v-2.500h10V16M.5 5.500h10v5h-10zM14.500 0v3M14.500 8v8" /><path d="M13 4h3v3h-3z" fill="#fff" stroke="none" /></Icon>
    </TaskButton>
    <TaskButton aria-label="File Explorer">
      <Icon w={22} h={18} sw={0}>
        <path d="M0 0h9l2 2H0z" fill="#e59a00" />
        <path d="M0 3h10l2-2h10v16H0z" fill="#ffd45e" />
        <path d="M4 18v-8h14v8h-4v-4H8v4z" fill="#3997dc" />
      </Icon>
    </TaskButton>
    <TaskButton aria-label="Mail">
      <Icon w={24} h={22} sw={0}>
        <path d="M0 8 12 0l12 8v4H0z" fill="#0a5bab" />
        <path d="M2 7h20v8H2z" fill="#fff" />
        <path d="M0 8v14h24V8l-12 8z" fill="#2db6f2" />
        <path d="M0 8v14h22z" fill="#1a8fe0" />
      </Icon>
    </TaskButton>
    <TaskButton aria-label="Dropbox">
      <Icon w={24} h={21} sw={0}>
        <path d="M6.500 0 12 3.800 6.500 7.500 1 3.800zM17.500 0 23 3.800l-5.500 3.700L12 3.800zM6.500 8 12 11.700l-5.500 3.600L1 11.700zM17.500 8l5.500 3.700-5.500 3.600-5.500-3.600zM12 13.300l5 3.500-5 3.700-5-3.700z" fill="#fff" />
      </Icon>
    </TaskButton>
    <TaskButton aria-label="Scribble">
      <Icon w={14} h={24} sw={0}><path d="M12 0 3 6.500Q1 9 3 11.500l4 3.500-5 9 8.500-6.500q3-3 0-5.500L7 8z" fill="#fff" /></Icon>
    </TaskButton>
    <TaskButton $open aria-label="Edge">
      <Icon w={24} h={24} sw={0}>
        <defs>
          <linearGradient id="edgeTop" x1="0" y1="0" x2="1" y2=".4">
            <stop offset="0" stopColor="#1f9ed8" /><stop offset=".6" stopColor="#2bc4c0" /><stop offset="1" stopColor="#66db4a" />
          </linearGradient>
        </defs>
        <circle cx="12" cy="12" r="12" fill="#0f7cd6" />
        <path d="M1 7.500C4 2 8 0 12.500 0 19 0 24 5 24 10.500c0 4-3 5.500-6 5.500-2 0-3.500-.7-3.500-1.500 0-.6 1-1.200 1-3 0-2.500-3-5-7-5S2 8.500.5 11z" fill="url(#edgeTop)" />
        <path d="M9 9.500c-5 4-1 13 6 14-8 1-13-5-12.500-9.500C3 11 6 9 9 9.500z" fill="#0b5fb0" />
        <path d="M14.500 14.500c0 1 2 2.500 4.500 2.500 1.500 0 3-.5 4.200-1.300l1.800 1.300-1.500 2.500C21.500 20.500 19 21 16 21c-4 0-6.500-3-6.500-6 0-2 1-4 3-4.500 2 0 3 1.500 2 4z" fill="#43291f" />
        <path d="M9.500 14c-.5 5 4 8.500 9 7.500l4-2.500q-4 5.500-10.500 5-5-1-5-6z" fill="#0f7cd6" />
      </Icon>
    </TaskButton>
    <TaskButton $open aria-label="Word">
      <Icon w={24} h={22} sw={0}>
        <path d="M6 0h18v6H6z" fill="#41a5ee" /><path d="M6 6h18v5H6z" fill="#2b7cd3" />
        <path d="M6 11h18v5H6z" fill="#185abd" /><path d="M6 16h18v6H6z" fill="#103f91" />
        <rect y="4" width="13" height="13" rx="1" fill="#185abd" />
        <text x="6.500" y="14.500" fontSize="10" fontWeight="700" fill="#fff" textAnchor="middle">W</text>
      </Icon>
    </TaskButton>
    <TaskButton $open $active aria-label="Excel">
      <Icon w={24} h={22} sw={0}>
        <path d="M5 0h10v6H5z" fill="#21a366" /><path d="M15 0h9v6h-9z" fill="#33c481" />
        <path d="M5 6h10v10H5z" fill="#107c41" /><path d="M15 6h9v5h-9z" fill="#21a366" />
        <path d="M15 11h9v5h-9z" fill="#107c41" /><path d="M5 16h19v6H5z" fill="#185c37" />
        <rect y="4" width="13" height="13" rx="1" fill="#107c41" />
        <text x="6.500" y="14.500" fontSize="11" fontWeight="700" fill="#fff" textAnchor="middle">X</text>
      </Icon>
    </TaskButton>
    <Spacer />
    <Tray>
      <TrayButton aria-label="Help">
        <Icon w={23} h={22} sw={0}>
          <circle cx="11" cy="11" r="10" fill="#1b9ddb" stroke="#fff" strokeWidth="2" />
          <text x="10.500" y="17" fontSize="16" fontWeight="700" fill="#fff" textAnchor="middle">?</text>
          <circle cx="18.500" cy="16.500" r="4.500" fill="#0a8fd0" />
          <path d="M18.500 14v5" stroke="#fff" strokeWidth="1.200" />
        </Icon>
      </TrayButton>
      <TrayButton aria-label="Show hidden icons"><Icon w={12} h={8} c="#fff" sw={1.200}><path d="m.5 7 5.500-5.500L11.500 7" /></Icon></TrayButton>
      <TrayButton aria-label="OneDrive">
        <Icon w={16} h={12} sw={0}>
          <path d="M3 10a3 3 0 0 1 0-6 5 5 0 0 1 9-1 3.500 3.500 0 0 1 1 7z" fill="#bfc4c5" />
          <path d="m4 10.500 5-5q3-1 4.500 1a2.500 2.500 0 0 1 0 4z" fill="#fff" />
        </Icon>
      </TrayButton>
      <TrayButton aria-label="Battery">
        <Icon w={16} h={10} c="#fff"><path d="M.5.500h13v8H.5zM15 3v3" /><path d="M2 2h3v5H2z" fill="#fff" stroke="none" /></Icon>
      </TrayButton>
      <TrayButton aria-label="Network">
        <Icon w={13} h={13} c="#fff" sw={1.100}>
          <path d="M.5 12.500Q1 1.500 12 .8M3.500 12.500Q4 4.500 12 4M6.500 12.500Q7 7.500 12 7" />
          <circle cx="10.500" cy="11" r="1.500" fill="#fff" />
        </Icon>
      </TrayButton>
      <TrayButton aria-label="Ink workspace">
        <Icon w={16} h={16} c="#fff"><path d="M5 7Q1 7 .8 11q.2 3 3.700 2 3-1.500 1.500-5M7 11l1-4 4-6 2.500 1.500-4 6.500zM10 12q4 1 5-4" /></Icon>
      </TrayButton>
      <Clock>12:19 AM<br />5/3/2020</Clock>
      <Notifications aria-label="Notifications">
        <Icon w={17} h={17} sw={0}><path d="M0 0h16v13h-4v3l-4-3H0z" fill="#fff" /><path d="M3 3.500h10M3 6.500h10M3 9.500h6" stroke="#21383d" strokeWidth="1" /></Icon>
        <Badge>2</Badge>
      </Notifications>
      <DesktopEdge />
    </Tray>
  </Taskbar>
);

const App = () => (
  <Page>
    <GlobalStyle />
    <BrowserStrip />
    <ExcelTitle />
    <ExcelMenu />
    <ExcelRibbon />
    <SignInMessage />
    <Formula />
    <SheetGrid />
    <TabStrip />
    <Status />
    <WindowsBar />
  </Page>
);

export default App;
